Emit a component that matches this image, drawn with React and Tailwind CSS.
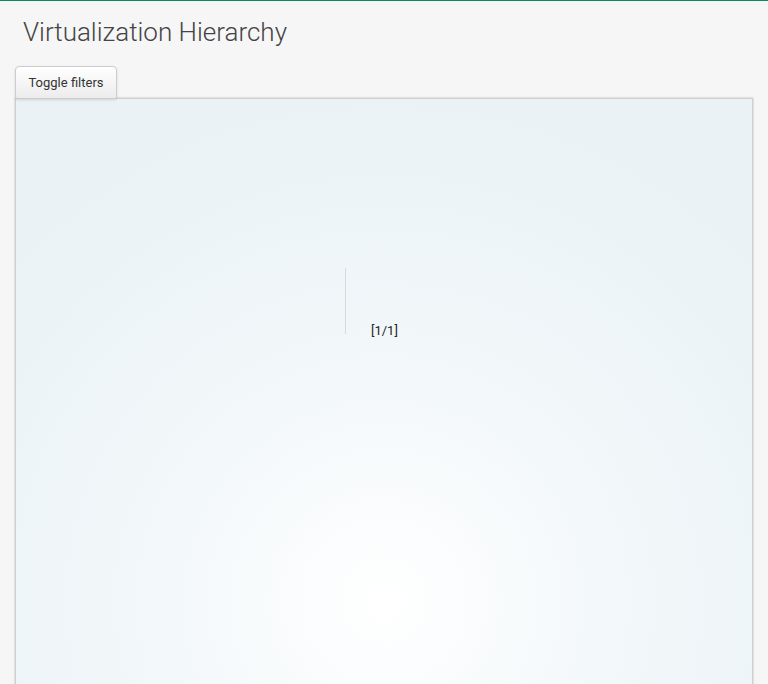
import React from 'react';

function App() {
  return (
    <div
      className="min-h-[684px] bg-[#f6f6f6] border-t border-[#0b8a5f] overflow-hidden"
      style={{ fontFamily: 'Roboto, "Liberation Sans", sans-serif' }}
    >
      <h1 className="ml-[23px] mt-[15px] text-[26px] font-light leading-[32px] text-[#444]">
        Virtualization Hierarchy
      </h1>
      <div className="mx-[15px] mt-[18px]">
        <button
          type="button"
          className="h-[33px] w-[102px] rounded-t-[4px] rounded-b-[2px] border border-[#ccc] bg-gradient-to-b from-white to-[#ececec] text-[13px] text-[#333] shadow-sm"
        >
          Toggle filters
        </button>
        <div className="-mt-px h-[600px] border border-[#cfcfcf] shadow-[0_0_2px_rgba(0,0,0,0.25)] bg-[radial-gradient(circle_at_50%_84%,#ffffff_0%,#f3f8fa_35%,#eaf2f6_80%)] pl-[329px] pt-[169px]">
          <div className="flex items-end">
            <div className="h-[66px] w-px bg-[#d9d9d9]" />
            <span className="ml-[25px] mb-[-5px] text-[13px] leading-[16px] text-[#222]">[1/1]</span>
          </div>
        </div>
      </div>
    </div>
  );
}

export default App;
